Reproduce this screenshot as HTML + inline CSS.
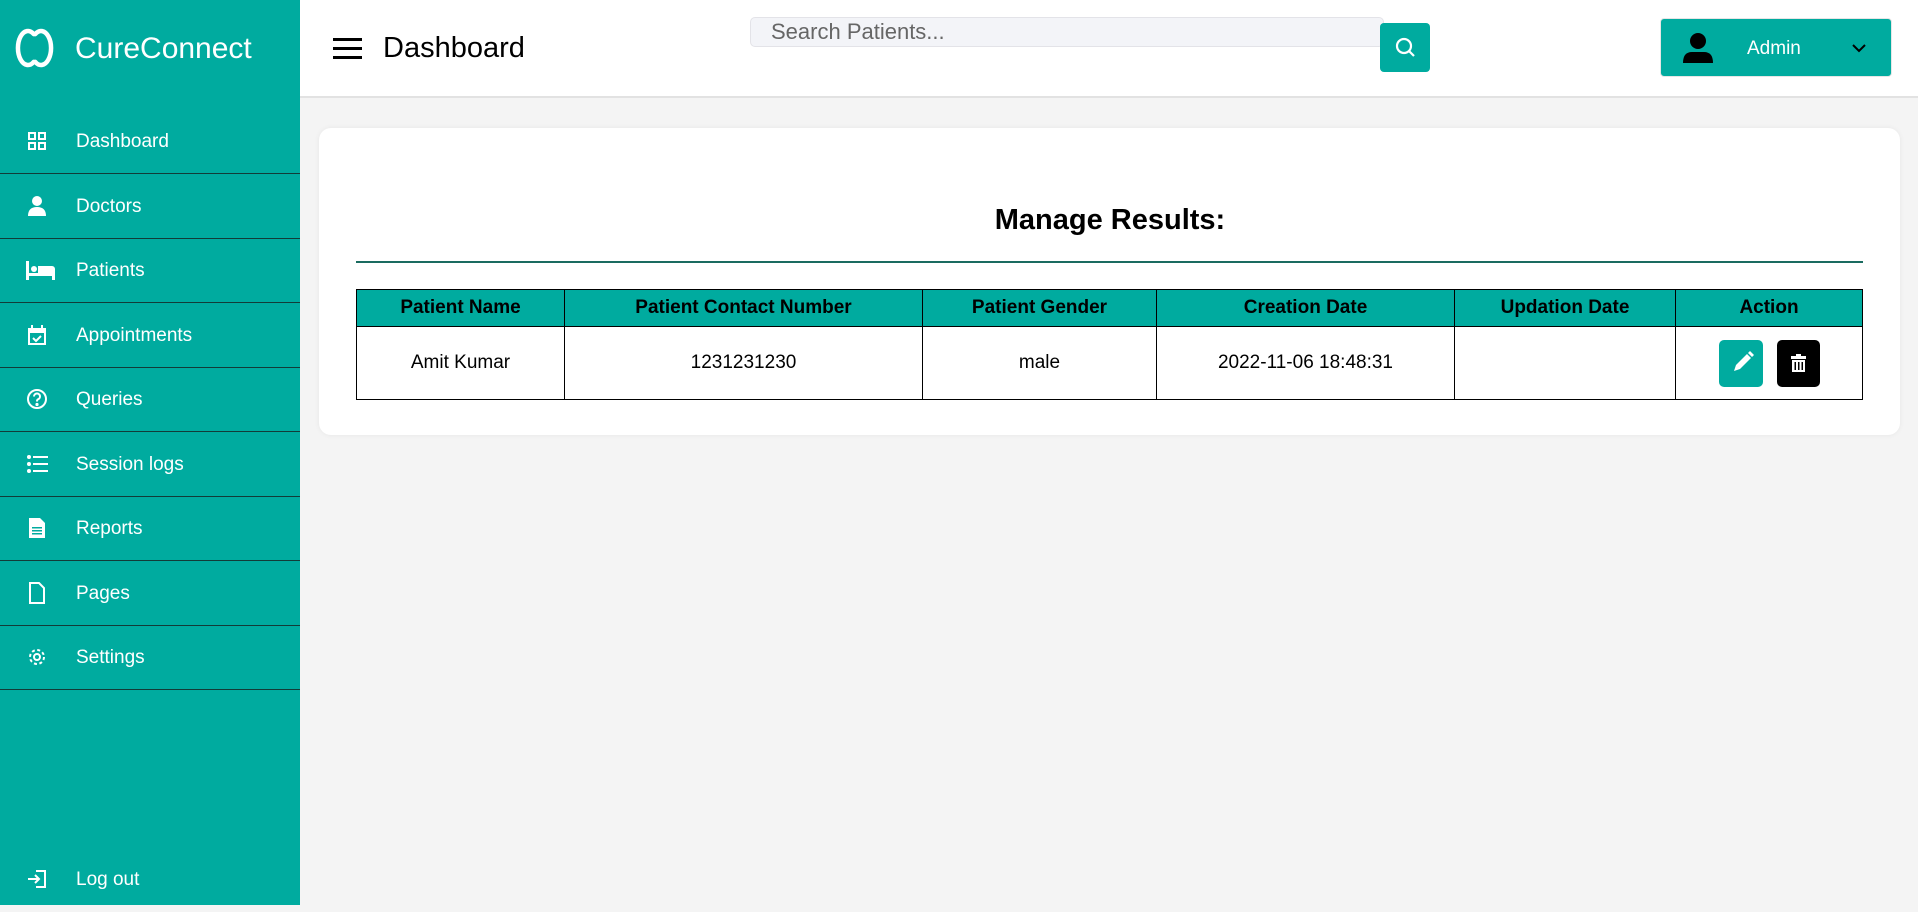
<!DOCTYPE html>
<html><head><meta charset="utf-8"><style>
*{box-sizing:border-box;margin:0;padding:0}
body{width:1918px;height:905px;overflow:hidden;background:#f4f4f4;font-family:"Liberation Sans",sans-serif;position:relative}
.side{position:absolute;left:0;top:0;width:300px;height:905px;background:#00ab9f;color:#fff}
.logo{position:absolute;left:12px;top:25px}
.brand{position:absolute;left:75px;top:32px;font-size:30px}
.nav{position:absolute;left:0;width:300px;height:64.5px;border-bottom:1.5px solid #123c38}
.nav span{position:absolute;left:76px;top:50%;transform:translateY(-45%);font-size:19px}
.nav svg{position:absolute;left:26px;top:50%;transform:translateY(-50%)}
.top{position:absolute;left:300px;top:0;right:0;height:98px;background:#fff;border-bottom:2px solid #e2e2e2}
.card{position:absolute;left:319px;top:128px;width:1581px;height:307px;background:#fff;border-radius:12px;box-shadow:0 0 6px rgba(0,0,0,.06)}
table{position:absolute;left:356px;top:289px;width:1507px;border-collapse:collapse;font-size:19px;text-align:center}
th{background:#00ab9f;height:37px;border:1.5px solid #000;font-weight:bold}
td{height:73px;border:1.5px solid #000}
</style></head><body>
<div class="side">
<svg class="logo" width="48" height="46" viewBox="0 0 48 46" fill="none" stroke="#fff" stroke-width="4.5" stroke-linecap="round"><path d="M21.7 9.1 A10 17 0 1 0 21.7 36.9"/><path d="M23.3 9.1 A10 17 0 1 1 23.3 36.9"/></svg>
<div class="brand">CureConnect</div>
<div class="nav" style="top:109px;height:65px"><svg width="22" height="22" viewBox="0 0 22 22" fill="none" stroke="#fff" stroke-width="2"><rect x="3" y="3" width="6" height="6"/><rect x="13" y="3" width="6" height="6"/><rect x="3" y="13" width="6" height="6"/><rect x="13" y="13" width="6" height="6"/></svg><span>Dashboard</span></div>
<div class="nav" style="top:174px"><svg width="22" height="22" viewBox="0 0 22 22" fill="#fff"><circle cx="11" cy="6" r="5"/><path d="M2 21 Q2 12 11 12 Q20 12 20 21Z"/></svg><span>Doctors</span></div>
<div class="nav" style="top:238.5px"><svg width="30" height="22" viewBox="0 0 30 22" fill="#fff"><rect x="0" y="2" width="3" height="19"/><circle cx="8" cy="10" r="3"/><path d="M12 7h14a3 3 0 0 1 3 3v11h-3v-4H3v-3h9z"/></svg><span>Patients</span></div>
<div class="nav" style="top:303px"><svg width="22" height="22" viewBox="0 0 22 22" fill="#fff"><path d="M2 4h18v17H2z M4 9v10h14V9z"/><rect x="5" y="1" width="2" height="5"/><rect x="15" y="1" width="2" height="5"/><path d="M7 14l3 3 5-5" stroke="#fff" stroke-width="2" fill="none"/></svg><span>Appointments</span></div>
<div class="nav" style="top:367.5px"><svg width="22" height="22" viewBox="0 0 22 22" fill="none" stroke="#fff" stroke-width="2"><circle cx="11" cy="11" r="9"/><path d="M8 8.5a3 3 0 1 1 4 2.8c-1 .4-1 1-1 2.2"/><circle cx="11" cy="16.5" r=".6" fill="#fff"/></svg><span>Queries</span></div>
<div class="nav" style="top:432px"><svg width="22" height="22" viewBox="0 0 22 22" fill="#fff"><circle cx="3" cy="4" r="2"/><circle cx="3" cy="11" r="2"/><circle cx="3" cy="18" r="2"/><rect x="7" y="3" width="15" height="2"/><rect x="7" y="10" width="15" height="2"/><rect x="7" y="17" width="15" height="2"/></svg><span>Session logs</span></div>
<div class="nav" style="top:496.5px"><svg width="22" height="22" viewBox="0 0 22 22" fill="#fff"><path d="M3 1h11l5 5v15H3z"/><rect x="6" y="10" width="10" height="1.5" fill="#00ab9f"/><rect x="6" y="13" width="10" height="1.5" fill="#00ab9f"/><rect x="6" y="16" width="10" height="1.5" fill="#00ab9f"/></svg><span>Reports</span></div>
<div class="nav" style="top:561px"><svg width="22" height="22" viewBox="0 0 22 22" fill="none" stroke="#fff" stroke-width="2"><path d="M4 1h9l5 5v15H4z"/></svg><span>Pages</span></div>
<div class="nav" style="top:625.5px"><svg width="22" height="22" viewBox="0 0 22 22" fill="none" stroke="#fff" stroke-width="2"><circle cx="11" cy="11" r="3"/><circle cx="11" cy="11" r="7" stroke-dasharray="3 2.5"/></svg><span>Settings</span></div>
<div class="nav" style="top:847px;border:none"><svg width="22" height="22" viewBox="0 0 22 22" fill="none" stroke="#fff" stroke-width="2"><path d="M10 3h9v16h-9"/><path d="M2 11h11M9 7l4 4-4 4"/></svg><span>Log out</span></div>
</div>
<div class="top">
<div style="position:absolute;left:33px;top:38px;width:29px;height:3px;background:#000;box-shadow:0 9px #000,0 18px #000"></div>
<div style="position:absolute;left:83px;top:32px;font-size:29px">Dashboard</div>
<div style="position:absolute;left:450px;top:17px;width:634px;height:30px;background:#f3f4f8;border:1px solid #e3e3e8;border-radius:5px;font-size:22px;color:#666;padding:1px 20px">Search Patients...</div>
<div style="position:absolute;left:1080px;top:23px;width:50px;height:49px;background:#00ab9f;border-radius:4px"><svg width="50" height="49" viewBox="0 0 50 49" fill="none" stroke="#fff" stroke-width="2.2"><circle cx="24" cy="23" r="7"/><path d="M29 28l5 5"/></svg></div>
<div style="position:absolute;left:1360px;top:18px;width:232px;height:59px;background:#00ab9f;border-radius:4px;border:1px solid #e6e6e6">
<svg style="position:absolute;left:21px;top:13px" width="32" height="32" viewBox="0 0 32 32"><circle cx="16" cy="9" r="8"/><path d="M1 31 Q1 20 10 20 H22 Q31 20 31 31Z"/></svg>
<div style="position:absolute;left:86px;top:19px;color:#fff;font-size:19px">Admin</div>
<svg style="position:absolute;left:190px;top:23px" width="16" height="12" viewBox="0 0 16 12" fill="none" stroke="#000" stroke-width="2"><path d="M2 3l6 6 6-6"/></svg>
</div>
</div>
<div class="card"></div>
<div style="position:absolute;left:0;width:2220px;top:204px;text-align:center;font-size:29px;font-weight:bold">Manage Results:</div>
<div style="position:absolute;left:356px;top:261px;width:1507px;height:2px;background:#1a6b60"></div>
<table>
<tr><th style="width:208px">Patient Name</th><th style="width:358px">Patient Contact Number</th><th style="width:234px">Patient Gender</th><th style="width:298px">Creation Date</th><th style="width:221px">Updation Date</th><th>Action</th></tr>
<tr><td>Amit Kumar</td><td>1231231230</td><td>male</td><td>2022-11-06 18:48:31</td><td></td><td>
<span style="display:inline-block;vertical-align:middle;width:44px;height:47px;background:#00ab9f;border-radius:5px;margin-right:14px"><svg width="44" height="47" viewBox="0 0 44 47" fill="#fff"><path d="M15 31l2-6 11-11 4 4-11 11z"/><path d="M29 13l2-2 4 4-2 2z"/></svg></span><span style="display:inline-block;vertical-align:middle;width:43px;height:47px;background:#000;border-radius:5px"><svg width="43" height="47" viewBox="0 0 43 47" fill="#fff"><rect x="14" y="16" width="15" height="3"/><rect x="19" y="14" width="5" height="2"/><path d="M15 20h13v12H15z M17.5 22v8h1.5v-8z M21 22v8h1.5v-8z M24.5 22v8h1.5v-8z" fill-rule="evenodd"/></svg></span></td></tr>
</table>
</body></html>
